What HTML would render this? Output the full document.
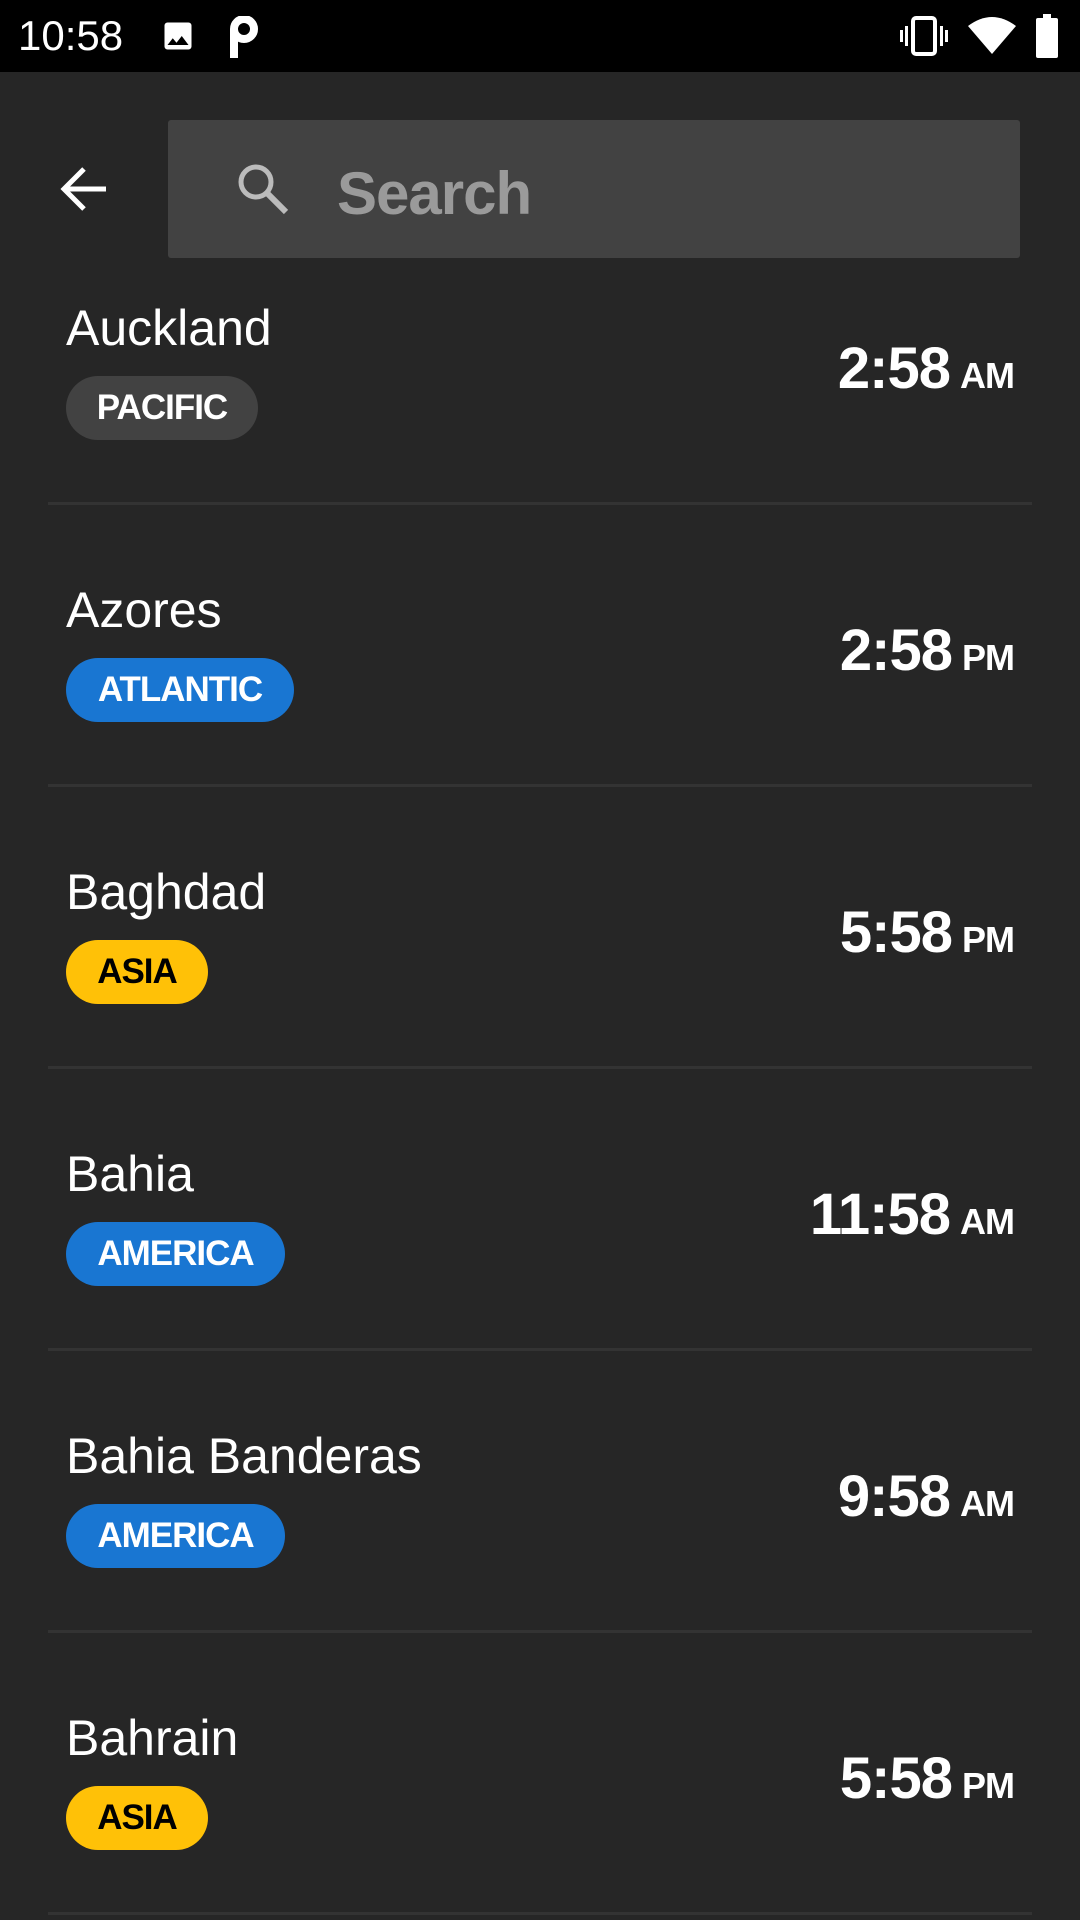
<!DOCTYPE html>
<html><head><meta charset="utf-8"><style>
*{margin:0;padding:0;box-sizing:border-box}
body{width:1080px;height:1920px;background:#262626;position:relative;overflow:hidden;font-family:"Liberation Sans",sans-serif;color:#fff}
.sb{position:absolute;left:0;top:0;width:1080px;height:72px;background:#000}
.abs{position:absolute}
.row{position:absolute;left:0;width:1080px;height:282px}
.city{position:absolute;left:66px;top:76px;font-size:50px;line-height:60px;white-space:nowrap}
.pill{position:absolute;left:66px;top:154px;height:64px;border-radius:32px;font-weight:bold;font-size:35px;line-height:64px;text-align:center;letter-spacing:-1px;color:#fff}
.time{position:absolute;right:66px;top:114px;font-weight:bold;font-size:58px;line-height:66px;white-space:nowrap;letter-spacing:-1px}
.time span{font-size:36px;margin-left:10px}
.div{position:absolute;left:48px;width:984px;height:3px;background:#333;top:280px}
.pac{background:#424242}.blu{background:#1976d2}.yel{background:#ffc107;color:#000}
</style></head><body>
<div class="sb">
<div class="abs" style="left:18px;top:12px;font-size:42px;line-height:48px;">10:58</div>
<svg class="abs" style="left:160px;top:18px" width="36" height="36" viewBox="0 0 24 24"><path fill="#fff" d="M21 19V5a2 2 0 0 0-2-2H5a2 2 0 0 0-2 2v14a2 2 0 0 0 2 2h14a2 2 0 0 0 2-2zM8.5 13.5l2.5 3 3.5-4.5 4.5 6H5l3.5-4.5z"/></svg>
<svg class="abs" style="left:228px;top:16px" width="34" height="42" viewBox="0 0 34 42"><path fill="none" stroke="#fff" stroke-width="8" d="M6 42V13a10 10 0 0 1 20 0a10 10 0 0 1-20 0"/></svg>
<svg class="abs" style="left:900px;top:16px" width="50" height="40" viewBox="0 0 50 40"><rect x="13" y="2" width="22" height="36" rx="3" fill="none" stroke="#fff" stroke-width="4"/><rect x="5" y="10" width="3" height="20" fill="#fff"/><rect x="40" y="10" width="3" height="20" fill="#fff"/><rect x="0" y="14" width="3" height="12" fill="#fff"/><rect x="45" y="14" width="3" height="12" fill="#fff"/></svg>
<svg class="abs" style="left:968px;top:16px" width="48" height="40" viewBox="0 0 48 40"><path fill="#fff" d="M0 10Q24-8 48 10L24 38z"/></svg>
<svg class="abs" style="left:1036px;top:14px" width="22" height="44" viewBox="0 0 22 44"><rect x="7" y="0" width="8" height="4" fill="#fff"/><rect x="0" y="4" width="22" height="40" rx="2" fill="#fff"/></svg>
</div>
<svg class="abs" style="left:58px;top:165px" width="50" height="48" viewBox="0 0 50 48"><path d="M48 24H6M26 4L6 24l20 20" fill="none" stroke="#fff" stroke-width="5"/></svg>
<div class="abs" style="left:168px;top:120px;width:852px;height:138px;background:#424242;border-radius:3px"></div>
<svg class="abs" style="left:234px;top:160px" width="58" height="58" viewBox="0 0 58 58"><circle cx="22" cy="22" r="15" fill="none" stroke="#bbb" stroke-width="5"/><path d="M33 33l19 19" stroke="#bbb" stroke-width="6"/></svg>
<div class="abs" style="left:337px;top:158px;font-size:60px;line-height:72px;font-weight:bold;color:#9a9a9a;letter-spacing:-1px">Search</div>

<div class="row" style="top:222px"><div class="city">Auckland</div><div class="pill pac" style="width:192px">PACIFIC</div><div class="time">2:58<span>AM</span></div><div class="div"></div></div>
<div class="row" style="top:504px"><div class="city">Azores</div><div class="pill blu" style="width:228px">ATLANTIC</div><div class="time">2:58<span>PM</span></div><div class="div"></div></div>
<div class="row" style="top:786px"><div class="city">Baghdad</div><div class="pill yel" style="width:142px">ASIA</div><div class="time">5:58<span>PM</span></div><div class="div"></div></div>
<div class="row" style="top:1068px"><div class="city">Bahia</div><div class="pill blu" style="width:219px">AMERICA</div><div class="time">11:58<span>AM</span></div><div class="div"></div></div>
<div class="row" style="top:1350px"><div class="city">Bahia Banderas</div><div class="pill blu" style="width:219px">AMERICA</div><div class="time">9:58<span>AM</span></div><div class="div"></div></div>
<div class="row" style="top:1632px"><div class="city">Bahrain</div><div class="pill yel" style="width:142px">ASIA</div><div class="time">5:58<span>PM</span></div><div class="div"></div></div>
</body></html>
